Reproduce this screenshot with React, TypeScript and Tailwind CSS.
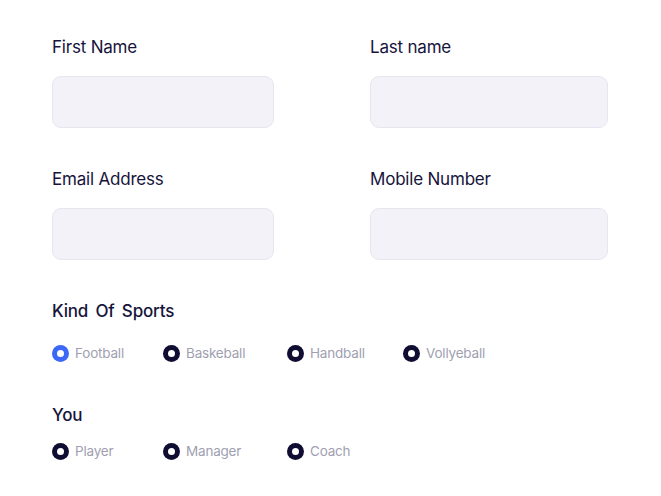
import React from 'react';

const Field = ({ label }: { label: string }) => (
  <div className="flex flex-col">
    <label className="text-[17px] leading-[22px] text-[#17143b] tracking-[-0.2px]">{label}</label>
    <div className="mt-[18px] h-[52px] rounded-[9px] bg-[#f3f2f8] border border-[#e7e6ef]" />
  </div>
);

const Radio = ({ label, active = false }: { label: string; active?: boolean }) => (
  <div className="flex items-center gap-[6px]">
    <span
      className={`w-[17px] h-[17px] rounded-full flex items-center justify-center ${
        active ? 'bg-[#3b68f6]' : 'bg-[#100d33]'
      }`}
    >
      <span className="w-[7px] h-[7px] rounded-full bg-white" />
    </span>
    <span className="text-[13.5px] tracking-[-0.2px] text-[#a09fb1]">{label}</span>
  </div>
);

export default function App() {
  const sports = ['Football', 'Baskeball', 'Handball', 'Vollyeball'];
  const roles = ['Player', 'Manager', 'Coach'];
  return (
    <div className="w-[661px] h-[496px] bg-white pl-[52px] pt-[36px]" style={{ fontFamily: 'Inter, "Noto Sans", sans-serif' }}>
      <div className="grid grid-cols-[222px_238px] gap-x-[96px] gap-y-[40px]">
        <Field label="First Name" />
        <Field label="Last name" />
        <Field label="Email Address" />
        <Field label="Mobile Number" />
      </div>

      <div className="mt-[40px]">
        <h3 className="text-[17px] leading-[22px] font-medium text-[#17143b] tracking-[-0.2px] [word-spacing:3px]">Kind Of Sports</h3>
        <div className="mt-[21px] grid grid-cols-[111px_124px_116px_auto] items-center">
          {sports.map((s, i) => (
            <Radio key={s} label={s} active={i === 0} />
          ))}
        </div>
      </div>

      <div className="mt-[41px]">
        <h3 className="text-[17px] leading-[22px] font-medium text-[#17143b] tracking-[-0.2px]">You</h3>
        <div className="mt-[15px] grid grid-cols-[111px_124px_116px_auto] items-center">
          {roles.map((r) => (
            <Radio key={r} label={r} />
          ))}
        </div>
      </div>
    </div>
  );
}
